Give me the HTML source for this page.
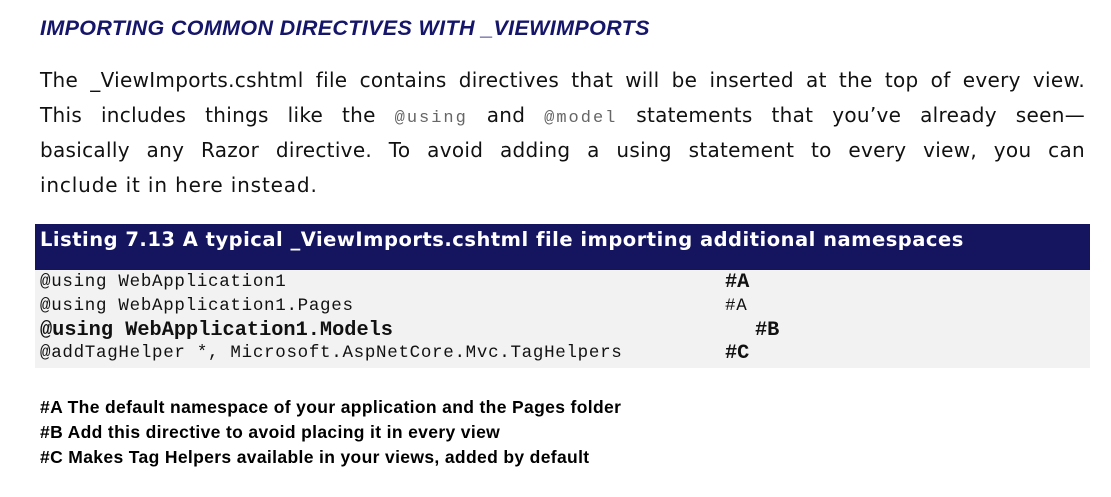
<!DOCTYPE html>
<html><head><style>
body{margin:0;width:1111px;height:497px;background:#fff;position:relative;overflow:hidden}
h1{position:absolute;left:40px;top:16px;margin:0;font:italic bold 21.5px "Liberation Sans",sans-serif;color:#15156a;letter-spacing:0.35px}
.p{position:absolute;left:40px;top:63px;width:1045px;margin:0;font:20px/35px "DejaVu Sans",sans-serif;color:#111;letter-spacing:0.3px}
.p div{text-align:justify;text-align-last:justify;white-space:nowrap}
.p div.last{text-align-last:left;letter-spacing:0.85px}
code{font:17px "Liberation Mono",monospace;color:#666;letter-spacing:2px}
.bar{position:absolute;left:35px;top:224px;width:1055px;height:46px;background:#14145f}
.bar span{position:absolute;left:5px;top:4px;font:bold 19.5px "DejaVu Sans",sans-serif;color:#fff;white-space:nowrap;letter-spacing:0.5px}
.code{position:absolute;left:35px;top:270px;width:1055px;height:98px;background:#f2f2f2}
.l{position:absolute;left:5px;font:17.5px "Liberation Mono",monospace;letter-spacing:0.7px;color:#111;white-space:nowrap}
.b{font:bold 20.3px "Liberation Mono",monospace;letter-spacing:0}
.fn{position:absolute;left:40px;font:bold 17.5px "Liberation Sans",sans-serif;color:#000;white-space:nowrap;letter-spacing:0.35px}
</style></head><body>
<h1>IMPORTING COMMON DIRECTIVES WITH _VIEWIMPORTS</h1>
<div class="p">
<div style="white-space:normal">The _ViewImports.cshtml file contains directives that will be inserted at the top of every view.</div>
<div style="white-space:normal">This includes things like the <code>@using</code> and <code>@model</code> statements that you’ve already seen—</div>
<div style="white-space:normal">basically any Razor directive. To avoid adding a using statement to every view, you can</div>
<div class="last">include it in here instead.</div>
</div>
<div class="bar"><span>Listing 7.13 A typical _ViewImports.cshtml file importing additional namespaces</span></div>
<div class="code">
<div class="l" style="top:2px">@using WebApplication1</div><div class="l b" style="top:1px;left:690px">#A</div>
<div class="l" style="top:26px">@using WebApplication1.Pages</div><div class="l" style="top:26px;left:690px">#A</div>
<div class="l b" style="top:49px">@using WebApplication1.Models</div><div class="l b" style="top:49px;left:720px">#B</div>
<div class="l" style="top:73px">@addTagHelper *, Microsoft.AspNetCore.Mvc.TagHelpers</div><div class="l b" style="top:72px;left:690px">#C</div>
</div>
<div class="fn" style="top:397px">#A The default namespace of your application and the Pages folder</div>
<div class="fn" style="top:422px">#B Add this directive to avoid placing it in every view</div>
<div class="fn" style="top:447px">#C Makes Tag Helpers available in your views, added by default</div>
</body></html>
